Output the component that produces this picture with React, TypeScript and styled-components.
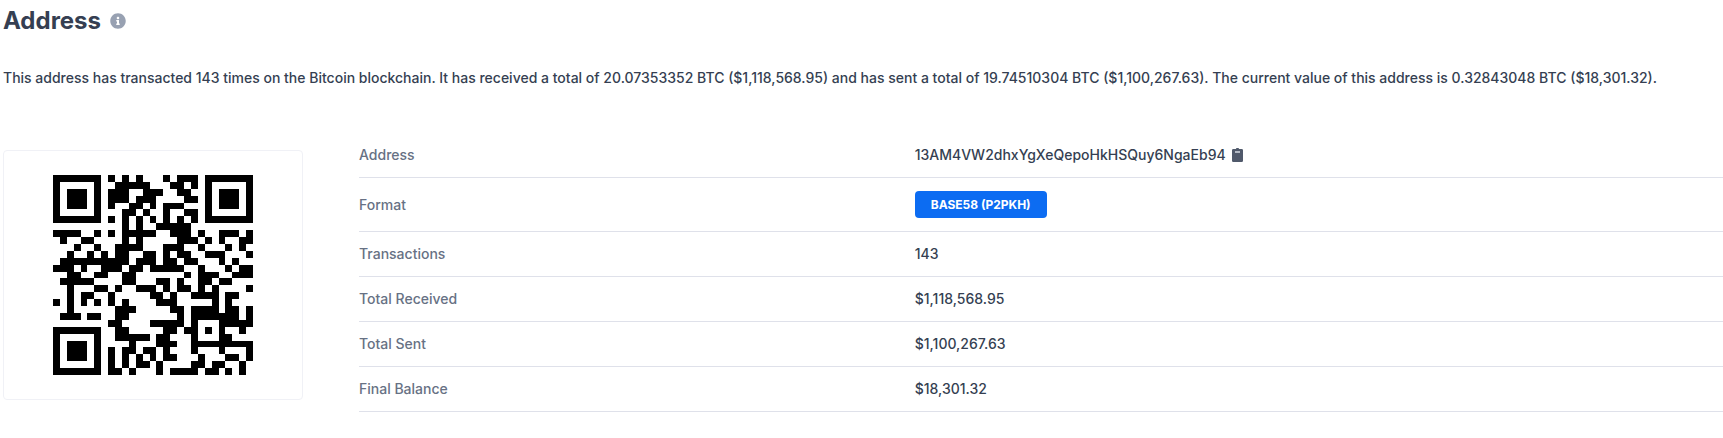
import React from "react";
import styled, { createGlobalStyle } from "styled-components";
import { FaInfoCircle } from "react-icons/fa";

const GlobalStyle = createGlobalStyle`
  *, *::before, *::after { box-sizing: border-box; }
  body {
    margin: 0;
    background: #ffffff;
    color: #353f52;
    font-family: Inter, "Liberation Sans", sans-serif;
    font-size: 14px;
    line-height: 20px;
    font-weight: 500;
  }
`;

/* ---- QR code, version 3, error correction level L, byte mode ---- */

const SIZE = 29;
const DATA_CODEWORDS = 55;
const EC_CODEWORDS = 15;
const FORMAT_BITS = "111100010011101";

function multiply(x: number, y: number): number {
  let z = 0;
  for (let i = 7; i >= 0; i--) {
    z = (z << 1) ^ ((z >>> 7) * 0x11d);
    z ^= ((y >>> i) & 1) * x;
  }
  return z;
}

function errorCorrection(data: number[]): number[] {
  const divisor: number[] = new Array(EC_CODEWORDS).fill(0);
  divisor[EC_CODEWORDS - 1] = 1;
  let root = 1;
  for (let i = 0; i < EC_CODEWORDS; i++) {
    for (let j = 0; j < EC_CODEWORDS; j++) {
      divisor[j] = multiply(divisor[j], root);
      if (j + 1 < EC_CODEWORDS) divisor[j] ^= divisor[j + 1];
    }
    root = multiply(root, 2);
  }
  const rest: number[] = new Array(EC_CODEWORDS).fill(0);
  for (const byte of data) {
    const factor = byte ^ (rest.shift() as number);
    rest.push(0);
    divisor.forEach((d, i) => (rest[i] ^= multiply(d, factor)));
  }
  return rest;
}

function codewords(text: string): number[] {
  let bits = "0100" + text.length.toString(2).padStart(8, "0");
  for (const ch of text) bits += ch.charCodeAt(0).toString(2).padStart(8, "0");
  bits += "0000";
  const data: number[] = [];
  for (let i = 0; i < bits.length; i += 8) {
    data.push(parseInt(bits.slice(i, i + 8).padEnd(8, "0"), 2));
  }
  for (let pad = 0xec; data.length < DATA_CODEWORDS; pad ^= 0xec ^ 0x11) data.push(pad);
  return [...data, ...errorCorrection(data)];
}

function qrMatrix(text: string): boolean[][] {
  const grid: (boolean | null)[][] = Array.from({ length: SIZE }, () =>
    new Array(SIZE).fill(null)
  );
  const pattern = (row: number, col: number, reach: number, lightRing: number) => {
    for (let r = -reach; r <= reach; r++) {
      for (let c = -reach; c <= reach; c++) {
        const y = row + r;
        const x = col + c;
        if (y < 0 || x < 0 || y >= SIZE || x >= SIZE) continue;
        const d = Math.max(Math.abs(r), Math.abs(c));
        grid[y][x] = d !== lightRing && d !== 4;
      }
    }
  };
  for (let i = 0; i < SIZE; i++) {
    grid[6][i] = i % 2 === 0;
    grid[i][6] = i % 2 === 0;
  }
  pattern(3, 3, 4, 2);
  pattern(3, SIZE - 4, 4, 2);
  pattern(SIZE - 4, 3, 4, 2);
  pattern(22, 22, 2, 1);

  for (let i = 0; i < 15; i++) {
    const on = FORMAT_BITS[i] === "1";
    if (i < 6) grid[8][i] = on;
    else if (i < 8) grid[8][i + 1] = on;
    else if (i === 8) grid[7][8] = on;
    else grid[14 - i][8] = on;
    if (i < 7) grid[SIZE - 1 - i][8] = on;
    else grid[8][SIZE - 15 + i] = on;
  }
  grid[SIZE - 8][8] = true;

  const bytes = codewords(text);
  let bit = 0;
  for (let right = SIZE - 1; right >= 1; right -= 2) {
    if (right === 6) right = 5;
    const upward = ((right + 1) & 2) === 0;
    for (let v = 0; v < SIZE; v++) {
      const y = upward ? SIZE - 1 - v : v;
      for (const x of [right, right - 1]) {
        if (grid[y][x] !== null) continue;
        const value = bit < bytes.length * 8 && ((bytes[bit >>> 3] >>> (7 - (bit & 7))) & 1) === 1;
        grid[y][x] = value !== ((x + y) % 3 === 0);
        bit++;
      }
    }
  }
  return grid as boolean[][];
}

function qrPath(text: string): string {
  return qrMatrix(text)
    .flatMap((row, y) => row.map((on, x) => (on ? `M${x} ${y}h1v1h-1z` : "")))
    .join("");
}

/* ---- Page ---- */

const Page = styled.main`
  padding: 6px 0 0 3px;
`;

const TitleBar = styled.header`
  display: flex;
  align-items: center;
  gap: 9px;
  height: 30px;
`;

const Title = styled.h1`
  margin: 0;
  font-size: 24px;
  line-height: 30px;
  font-weight: 700;
`;

const InfoIcon = styled(FaInfoCircle)`
  width: 16px;
  height: 16px;
  color: #98a1b2;
`;

const Summary = styled.p`
  margin: 32px 0 45px;
`;

const Content = styled.section`
  display: flex;
  align-items: flex-start;
  gap: 56px;
`;

const QrCard = styled.div`
  flex: none;
  display: flex;
  padding: 24px 49px;
  margin-top: 17px;
  border: 1px solid #f0f1f6;
  border-radius: 4px;
`;

const QrImage = styled.svg`
  display: block;
  width: 200px;
  height: 200px;
`;

const Details = styled.table`
  flex: 1;
  min-width: 0;
  table-layout: fixed;
  border-collapse: separate;
  border-spacing: 0;
`;

const Label = styled.th`
  width: calc(100% * 11 / 27);
  padding: 12px 0;
  border-bottom: 1px solid #dfe1ea;
  color: #677184;
  font-weight: 500;
  text-align: left;
`;

const Value = styled.td`
  padding: 12px 0;
  border-bottom: 1px solid #dfe1ea;
`;

const ValueLine = styled.div`
  display: flex;
  align-items: center;
  gap: 6px;
`;

const Badge = styled.span`
  display: block;
  width: fit-content;
  margin: 1px 0;
  padding: 4px 16px 3px;
  border-radius: 4px;
  background: #0c6cf2;
  color: #ffffff;
  font-size: 12px;
  font-weight: 700;
`;

const CopyButton = styled.button`
  display: flex;
  padding: 0;
  border: 0;
  background: none;
  color: #50596b;
  cursor: pointer;
`;

const ADDRESS = "13AM4VW2dhxYgXeQepoHkHSQuy6NgaEb94";

const ROWS: { label: string; value: React.ReactNode }[] = [
  {
    label: "Address",
    value: (
      <ValueLine>
        {ADDRESS}
        <CopyButton type="button" aria-label="Copy address">
          <svg width="11" height="14" viewBox="0 0 11 14">
            <path
              fill="currentColor"
              d="M1.3 1h2.500A1.8 1.8 0 0 1 7.200 1h2.500A1.300 1.300 0 0 1 11 2.300v10.400A1.300 1.300 0 0 1 9.700 14H1.300A1.300 1.300 0 0 1 0 12.700V2.300A1.300 1.300 0 0 1 1.300 1z"
            />
            <path fill="#b4bac5" d="M3 3h5v2H3z" />
          </svg>
        </CopyButton>
      </ValueLine>
    ),
  },
  { label: "Format", value: <Badge>BASE58 (P2PKH)</Badge> },
  { label: "Transactions", value: "143" },
  { label: "Total Received", value: "$1,118,568.95" },
  { label: "Total Sent", value: "$1,100,267.63" },
  { label: "Final Balance", value: "$18,301.32" },
];

export default function App() {
  return (
    <>
      <GlobalStyle />
      <Page>
        <TitleBar>
          <Title>Address</Title>
          <InfoIcon aria-hidden="true" />
        </TitleBar>
        <Summary>
          This address has transacted 143 times on the Bitcoin blockchain. It has received a total
          of 20.07353352 BTC ($1,118,568.95) and has sent a total of 19.74510304 BTC
          ($1,100,267.63). The current value of this address is 0.32843048 BTC ($18,301.32).
        </Summary>
        <Content>
          <QrCard>
            <QrImage
              viewBox={`0 0 ${SIZE} ${SIZE}`}
              shapeRendering="crispEdges"
              role="img"
              aria-label="Address QR code"
            >
              <path d={qrPath(`bitcoin:${ADDRESS}`)} fill="#000000" />
            </QrImage>
          </QrCard>
          <Details>
            <tbody>
              {ROWS.map((row) => (
                <tr key={row.label}>
                  <Label scope="row">{row.label}</Label>
                  <Value>{row.value}</Value>
                </tr>
              ))}
            </tbody>
          </Details>
        </Content>
      </Page>
    </>
  );
}
